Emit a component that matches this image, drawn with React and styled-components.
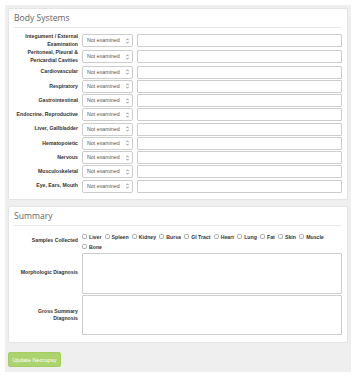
import React from "react";
import styled, { createGlobalStyle } from "styled-components";

const GlobalStyle = createGlobalStyle`
  html, body { margin: 0; padding: 0; background: #ffffff; }
  body { font-family: "Liberation Sans", Arial, sans-serif; }
  * { box-sizing: border-box; }
`;

const Page = styled.div`
  padding: 5px 6px 0 5px;
`;

const Wrapper = styled.div`
  width: 346px;
  background: #efefef;
  padding: 3px 3px 5px 3px;
`;

const Panel = styled.section`
  background: #ffffff;
  border: 1px solid #e4e4e4;
  border-radius: 2px;
  padding: 0 5px ${(p) => p.$bottom}px 5px;
  margin-bottom: ${(p) => p.$mb}px;
`;

const PanelTitle = styled.h2`
  margin: 0;
  height: 19px;
  padding-top: 4px;
  font-family: "Open Sans", "Liberation Sans", sans-serif;
  font-weight: 400;
  font-size: 8.6px;
  line-height: 10px;
  color: #666666;
  border-bottom: 1px solid #e9e9e9;
`;

const Form = styled.div`
  padding-top: 5px;
  display: flex;
  flex-direction: column;
  gap: ${(p) => p.$gap}px;
`;

const Row = styled.div`
  display: grid;
  grid-template-columns: ${(p) => (p.$wide ? "64px 1fr" : "64px 51px 1fr")};
  column-gap: 4px;
  align-items: center;
  min-height: 13px;
`;

const Label = styled.label`
  display: block;
  text-align: right;
  font-size: 5.2px;
  line-height: 7.5px;
  font-weight: 700;
  color: #333333;
`;

const SelectWrap = styled.div`
  position: relative;
  height: 13px;
`;

const Select = styled.select`
  display: block;
  appearance: none;
  -webkit-appearance: none;
  width: 100%;
  height: 13px;
  margin: 0;
  padding: 0 0 0 4px;
  border: 1px solid #cccccc;
  border-radius: 2px;
  background: #ffffff;
  font-family: "Liberation Sans", Arial, sans-serif;
  font-size: 5.3px;
  line-height: 11px;
  color: #555555;
  outline: none;
`;

const Arrow = styled.svg`
  position: absolute;
  right: 4px;
  top: 3.5px;
  width: 3px;
  height: 6px;
  pointer-events: none;
`;

const TextInput = styled.input`
  display: block;
  height: 13px;
  width: 100%;
  margin: 0;
  border: 1px solid #cccccc;
  border-radius: 1px;
  background: #ffffff;
  outline: none;
`;

const TextArea = styled.textarea`
  display: block;
  width: 100%;
  height: ${(p) => p.$h}px;
  margin: 0;
  border: 1px solid #cccccc;
  border-radius: 1px;
  resize: none;
  outline: none;
  background: #ffffff;
`;

const Checks = styled.div`
  display: flex;
  flex-wrap: wrap;
  align-items: center;
  align-content: center;
  row-gap: 2px;
  padding-top: 1px;
  min-height: 20px;
`;

const CheckItem = styled.label`
  display: inline-flex;
  align-items: center;
  height: 8px;
  margin-right: 3.2px;
  font-size: 5.2px;
  font-weight: 700;
  color: #333333;
`;

const CheckBox = styled.input.attrs({ type: "checkbox" })`
  appearance: none;
  -webkit-appearance: none;
  width: 5px;
  height: 5px;
  margin: 0 2px 0 0;
  border: 0.8px solid #a9a9a9;
  border-radius: 1.5px;
  background: linear-gradient(#ffffff, #f1f1f1);
`;

const Button = styled.button`
  display: block;
  margin-top: 9px;
  width: 53px;
  height: 15px;
  padding: 0;
  border: 1px solid #a5cd62;
  border-radius: 2px;
  background: #add36e;
  color: #ffffff;
  font-family: "Liberation Sans", Arial, sans-serif;
  font-size: 5.7px;
`;

const systems = [
  ["Integument / External", "Examination"],
  ["Peritoneal, Pleural &", "Pericardial Cavities"],
  ["Cardiovascular"],
  ["Respiratory"],
  ["Gastrointestinal"],
  ["Endocrine, Reproductive"],
  ["Liver, Gallbladder"],
  ["Hematopoietic"],
  ["Nervous"],
  ["Musculoskeletal"],
  ["Eye, Ears, Mouth"],
];

const samples = ["Liver", "Spleen", "Kidney", "Bursa", "GI Tract", "Heart", "Lung", "Fat", "Skin", "Muscle", "Bone"];

function SelectBox() {
  return (
    <SelectWrap>
      <Select defaultValue="ne">
        <option value="ne">Not examined</option>
        <option value="n">Normal</option>
        <option value="a">Abnormal</option>
      </Select>
      <Arrow viewBox="0 0 3 6">
        <path d="M0.3 2.3 L1.5 0.8 L2.7 2.3" fill="none" stroke="#555" strokeWidth="0.6" />
        <path d="M0.3 3.7 L1.5 5.2 L2.7 3.7" fill="none" stroke="#555" strokeWidth="0.6" />
      </Arrow>
    </SelectWrap>
  );
}

export default function App() {
  return (
    <>
      <GlobalStyle />
      <Page>
        <Wrapper>
          <Panel $bottom={6.5} $mb={6}>
            <PanelTitle>Body Systems</PanelTitle>
            <Form $gap={1.25}>
              {systems.map((lines) => (
                <Row key={lines[0]}>
                  <Label>
                    {lines.map((l, i) => (
                      <React.Fragment key={l}>
                        {i > 0 && <br />}
                        {l}
                      </React.Fragment>
                    ))}
                  </Label>
                  <SelectBox />
                  <TextInput type="text" />
                </Row>
              ))}
            </Form>
          </Panel>
          <Panel $bottom={7} $mb={0}>
            <PanelTitle>Summary</PanelTitle>
            <Form $gap={1.5}>
              <Row $wide>
                <Label>Samples Collected</Label>
                <Checks>
                  {samples.map((s) => (
                    <CheckItem key={s}>
                      <CheckBox />
                      {s}
                    </CheckItem>
                  ))}
                </Checks>
              </Row>
              <Row $wide>
                <Label>Morphologic Diagnosis</Label>
                <TextArea $h={41} />
              </Row>
              <Row $wide>
                <Label>
                  Gross Summary
                  <br />
                  Diagnosis
                </Label>
                <TextArea $h={40} />
              </Row>
            </Form>
          </Panel>
          <Button type="button">Update Necropsy</Button>
        </Wrapper>
      </Page>
    </>
  );
}
